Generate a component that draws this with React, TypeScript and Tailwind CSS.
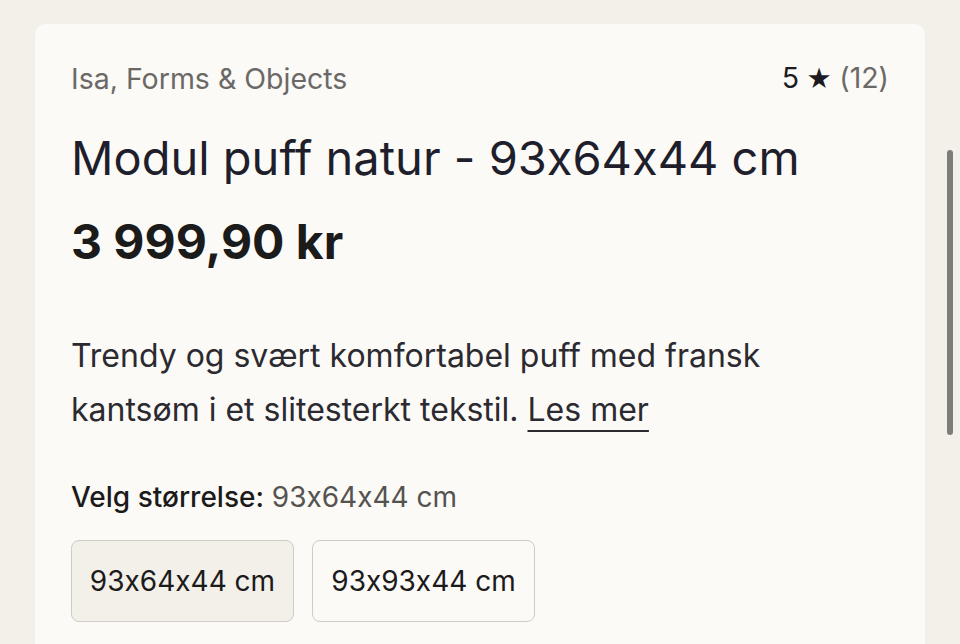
export default function App() {
  return (
    <div className="relative h-[644px] w-[960px] overflow-hidden bg-[#f3efe9] font-['Inter',sans-serif] [font-feature-settings:'calt'_0]">
      <div className="mx-[35px] mt-[24px] h-[700px] rounded-[10px] bg-[#fbfaf6] px-[36px] pt-[34px]">
        <div className="flex items-center justify-between text-[28.5px] leading-[40px]">
          <span className="text-[#6b6966]">Isa, Forms &amp; Objects</span>
          <span className="flex items-baseline gap-[7px] text-[#6b6966]">
            <span className="text-[#1c1b22]">5</span>
            <span className="text-[25px] text-[#1c1b22]">★</span>
            <span>(12)</span>
          </span>
        </div>
        <h1 className="mt-[31px] text-[47px] font-normal leading-[56px] text-[#1f1e2c]">
          Modul puff natur - 93x64x44 cm
        </h1>
        <p className="mt-[31px] text-[48px] font-bold leading-[50px] text-[#1c1b1b]">3 999,90 kr</p>
        <p className="mt-[62px] max-w-[740px] text-[32px] leading-[54px] text-[#2b2a30]">
          Trendy og svært komfortabel puff med fransk kantsøm i et slitesterkt tekstil.{" "}
          <a className="underline decoration-2 underline-offset-[9px]">Les mer</a>
        </p>
        <p className="mt-[40px] text-[28px] leading-[40px]">
          <span className="font-medium text-[#1c1b1b]">Velg størrelse:</span>{" "}
          <span className="text-[#55534f]">93x64x44 cm</span>
        </p>
        <div className="mt-[23px] flex gap-[18px]">
          <button className="h-[82px] w-[223px] rounded-[8px] border border-[#cfcbc6] bg-[#f3efe9] text-[28px] text-[#1c1b1b]">
            93x64x44 cm
          </button>
          <button className="h-[82px] w-[223px] rounded-[8px] border border-[#cfcbc6] bg-[#fbfaf6] text-[28px] text-[#1c1b1b]">
            93x93x44 cm
          </button>
        </div>
      </div>
      <div className="absolute left-[947px] top-[150px] h-[285px] w-[6px] rounded-full bg-[#7f7d7a]" />
    </div>
  );
}
